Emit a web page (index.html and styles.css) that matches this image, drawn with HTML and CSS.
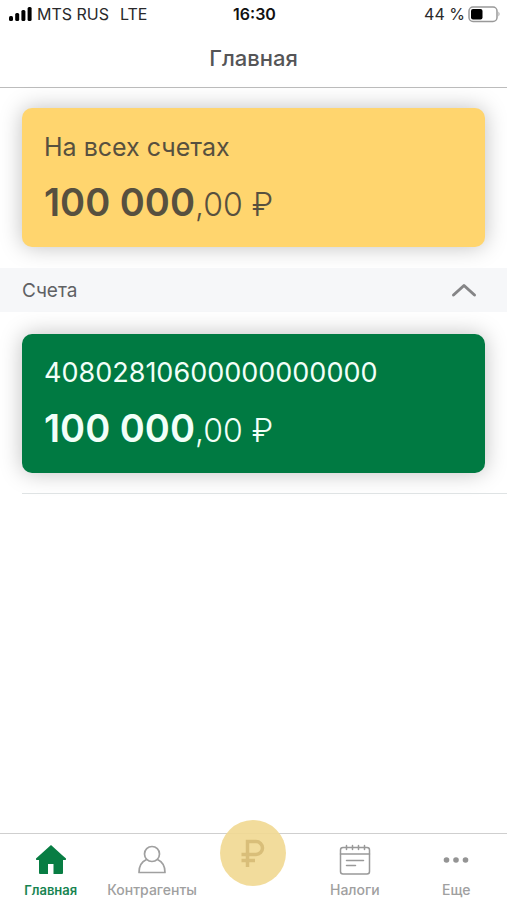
FILE: index.html
```html
<!DOCTYPE html>
<html lang="ru">
<head>
<meta charset="utf-8">
<meta name="viewport" content="width=device-width, initial-scale=1">
<title>Главная</title>
<link rel="stylesheet" href="styles.css">
</head>
<body>
<div class="status">
  <div class="status-left">
    <svg class="signal" width="23" height="15" viewBox="0 0 23 15" aria-hidden="true">
      <rect x="0" y="9" width="4" height="5" rx="1.5"/><rect x="6.200" y="6" width="4" height="8" rx="1.500"/><rect x="12.400" y="3" width="4" height="11" rx="1.500"/><rect x="18.600" y="0" width="4" height="14" rx="1.500"/>
    </svg>
    <span>MTS RUS</span>
    <span class="network">LTE</span>
  </div>
  <time class="clock">16:30</time>
  <div class="status-right">
    <span>44 %</span>
    <svg width="32" height="17" viewBox="0 0 32 17" aria-hidden="true">
      <rect x="1" y="1" width="28" height="14.500" rx="4" fill="#fff" stroke="#999" stroke-width="1.500"/>
      <rect x="3" y="3" width="11.500" height="10.500" rx="2"/>
      <path d="M30.500 5.500q2 2.500 0 5z" fill="#999"/>
    </svg>
  </div>
</div>
<header class="header"><h1>Главная</h1></header>
<main class="content">
  <section class="card-area">
    <article class="card card-total">
      <h2>На всех счетах</h2>
      <p class="amount"><strong>100 000</strong>,00 ₽</p>
    </article>
  </section>
  <button class="section-toggle" type="button" aria-expanded="true" aria-controls="accounts">
    <span>Счета</span>
    <svg width="26" height="16" viewBox="0 0 26 16" fill="none" stroke="#858587" stroke-width="3" stroke-linecap="round" stroke-linejoin="round" aria-hidden="true"><path d="M2.500 13 13 3.500 23.500 13"/></svg>
  </button>
  <section class="card-area accounts" id="accounts">
    <article class="card card-account">
      <h2>40802810600000000000</h2>
      <p class="amount"><strong>100 000</strong>,00 ₽</p>
    </article>
  </section>
</main>
<nav class="tabs">
  <a class="tab active" href="#home" aria-current="page">
    <svg width="32" height="32" viewBox="0 0 32 32" fill="#087d43" aria-hidden="true"><path d="M16 1 1 14.500Q.500 16 2 16H4V29q0 1 1 1H13V20h5.500V30H27q1 0 1-1V16h2q1.500 0 1-1.500L27 11z"/></svg>
    <span>Главная</span>
  </a>
  <a class="tab" href="#partners">
    <svg width="32" height="32" viewBox="0 0 32 32" fill="none" stroke="#a0a0a0" stroke-width="1.700" stroke-linejoin="round" aria-hidden="true"><circle cx="16" cy="10" r="7.500"/><path d="M10.500 15.500C6 17.500 3 22 3 28.500H29C29 22 26 17.500 21.500 15.500"/></svg>
    <span>Контрагенты</span>
  </a>
  <a class="pay" href="#pay" aria-label="Новый платеж">
    <svg width="26" height="30" viewBox="0 0 26 30" fill="none" stroke="#d9be79" stroke-width="3.500" aria-hidden="true"><path d="M7.500 29V3.500H16a6.500 6.500 0 0 1 0 13H1.500M1.500 22.500H15"/></svg>
  </a>
  <a class="tab" href="#taxes">
    <svg width="32" height="32" viewBox="0 0 32 32" fill="none" stroke="#999" stroke-width="1.500" stroke-linecap="round" aria-hidden="true"><rect x="1.500" y="3.500" width="29" height="26.500" rx="2.500"/><path d="M1.500 10H30.500M7.500 1.500v4M13.500 1.500v4M19.500 1.500v4M25.500 1.500v4M7.500 16.500H24.500M7.500 21.500H16.500"/></svg>
    <span>Налоги</span>
  </a>
  <a class="tab" href="#more">
    <svg width="32" height="32" viewBox="0 0 32 32" fill="#949494" aria-hidden="true"><circle cx="6.500" cy="16" r="2.800"/><circle cx="16" cy="16" r="2.800"/><circle cx="25.500" cy="16" r="2.800"/></svg>
    <span>Еще</span>
  </a>
</nav>
</body>
</html>
```
FILE: styles.css
```css
* { box-sizing: border-box; }

body {
  margin: 0;
  min-height: 100vh;
  display: flex;
  flex-direction: column;
  background: #fff;
  color: #555557;
  font-family: Inter, "Liberation Sans", sans-serif;
}

h1, h2, p { margin: 0; }

.status {
  display: grid;
  grid-template-columns: 1fr auto 1fr;
  align-items: center;
  height: 28px;
  padding: 0 7px 0 9px;
  color: #29292b;
  font-size: 16px;
  line-height: 20px;
}

.status-left, .status-right { display: flex; align-items: center; }
.status-left { gap: 5px; }
.status-right { justify-content: flex-end; gap: 3px; }
.network { margin-left: 6px; }
.clock { color: #111; font-weight: 600; }

.header {
  height: 60px;
  display: flex;
  align-items: center;
  justify-content: center;
  border-bottom: 1px solid #bcbcbc;
}

.header h1 { font-size: 22px; line-height: 28px; font-weight: 500; }

.card-area { padding: 20px 22px 21px; }

.card {
  padding: 23px 22px 18px;
  border-radius: 10px;
  box-shadow: 0 0 22px rgba(0, 0, 0, 0.25);
}

.card h2 { font-size: 25px; line-height: 32px; font-weight: 400; }
.card-total { background: #ffd56e; color: #57503f; }
.card-account { background: #007a42; color: #f2fff8; }
.card-account h2 { font-size: 27px; }

.amount {
  margin-top: 18px;
  font-size: 32px;
  line-height: 48px;
  font-weight: 300;
}

.amount strong { font-size: 38px; line-height: 40px; font-weight: 600; }

.section-toggle {
  width: 100%;
  height: 44px;
  display: flex;
  align-items: center;
  justify-content: space-between;
  padding: 0 30px 0 22px;
  border: 0;
  background: #f6f7f9;
  color: #606164;
  font: inherit;
  font-size: 19px;
}

.accounts { padding-top: 22px; }
.accounts::after {
  content: "";
  display: block;
  height: 1px;
  margin: 20px -22px 0 0;
  background: #dfe3e4;
}

.tabs {
  display: grid;
  grid-template-columns: repeat(5, 1fr);
  height: 67px;
  margin-top: auto;
  border-top: 1px solid #cfcfcf;
}

.tab {
  display: flex;
  flex-direction: column;
  align-items: center;
  gap: 5px;
  padding-top: 10px;
  color: #a0a0a0;
  font-size: 14px;
  line-height: 18px;
  font-weight: 500;
  text-decoration: none;
}

.active { color: #168451; font-size: 13px; font-weight: 600; }

.pay {
  justify-self: center;
  display: flex;
  align-items: center;
  justify-content: center;
  width: 66px;
  height: 66px;
  margin-top: -14px;
  border-radius: 50%;
  background: rgba(241, 216, 145, 0.9);
}
```
